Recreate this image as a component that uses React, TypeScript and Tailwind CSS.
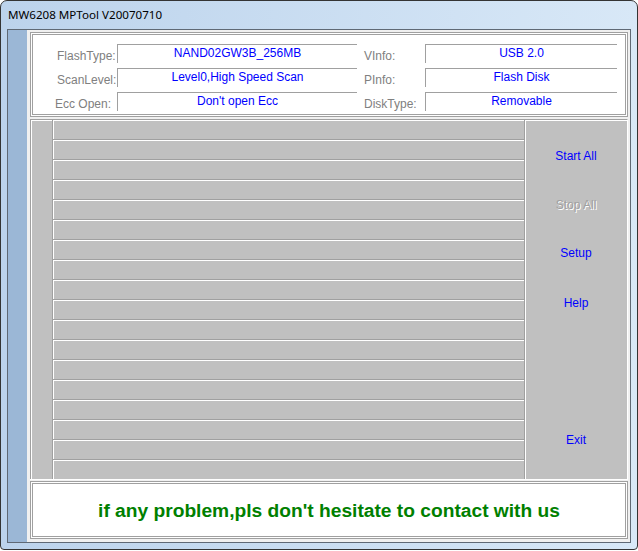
import React from 'react'

const infoRows = [
  { label: 'FlashType:', pad: 'pl-[24px]', value: 'NAND02GW3B_256MB', label2: 'VInfo:', value2: 'USB 2.0' },
  { label: 'ScanLevel:', pad: 'pl-[24px]', value: 'Level0,High Speed Scan', label2: 'PInfo:', value2: 'Flash Disk' },
  { label: 'Ecc Open:', pad: 'pl-[22px]', value: "Don't open Ecc", label2: 'DiskType:', value2: 'Removable' },
]

const cell = 'border-t border-l border-[#a0a0a0] shadow-[inset_1px_1px_0_#fff] bg-[#c0c0c0]'

export default function App() {
  const rows = Array.from({ length: 18 }, (_, i) => i)

  return (
    <div className="w-[638px] h-[551px] bg-white font-['Liberation_Sans',Arial,sans-serif] text-[12px]">
      <div className="w-[638px] h-[550px] border border-[#343434] rounded-t-[7px] rounded-b-[4px] bg-gradient-to-r from-[#bcd3ec] to-[#d8e8f7] flex flex-col overflow-hidden">
        {/* title bar */}
        <div className="h-[28px] shrink-0 pl-[7px] flex items-center text-[11.6px] text-black font-['Noto_Sans',sans-serif]">
          MW6208 MPTool V20070710
        </div>

        {/* client area */}
        <div className="flex-1 mx-[6px] mb-[6px] border border-[#5f6975] flex">
          <div className="w-[20px] bg-[#9bb7d6]" />
          <div className="flex-1 bg-[#f0f0f0] pl-[3px] pr-[2px] pt-[2px]">
            {/* info panel */}
            <div className="h-[85px] border border-[#a0a0a0] p-px bg-white">
              <div className="h-full border border-[#a0a0a0] bg-white pt-[9px] flex flex-col gap-[5px]">
                {infoRows.map((r) => (
                  <div key={r.label} className="flex h-[19px]">
                    <div className={`w-[84px] pt-[5px] leading-[15px] text-[#808080] whitespace-nowrap ${r.pad}`}>{r.label}</div>
                    <div className="w-[240px] border-t border-l border-[#a0a0a0] text-center leading-[16px] text-[#0000ff] whitespace-nowrap">
                      {r.value}
                    </div>
                    <div className="w-[68px] pl-[7px] pt-[5px] leading-[15px] text-[#808080] whitespace-nowrap">{r.label2}</div>
                    <div className="w-[192px] border-t border-l border-[#a0a0a0] text-center leading-[16px] text-[#0000ff] whitespace-nowrap">
                      {r.value2}
                    </div>
                  </div>
                ))}
              </div>
            </div>

            {/* device grid */}
            <div className="mt-[2px] h-[361px] flex border-b border-white">
              <div className={`w-[22px] h-[360px] ${cell}`} />
              <div className="w-[472px] flex flex-col">
                {rows.map((i) => (
                  <div key={i} className={`h-[20px] ${cell}`} />
                ))}
              </div>
              <div className={`w-[104px] h-[360px] border-r border-r-white ${cell} flex flex-col items-center pt-[29px] leading-[15px]`}>
                <button className="text-[#0000ff] leading-[15px]">Start All</button>
                <button className="mt-[34px] text-[#a0a0a0] leading-[15px] [text-shadow:1px_1px_0_#fff]">Stop All</button>
                <button className="mt-[33px] text-[#0000ff] leading-[15px]">Setup</button>
                <button className="mt-[35px] text-[#0000ff] leading-[15px]">Help</button>
                <button className="mt-[122px] text-[#0000ff] leading-[15px]">Exit</button>
              </div>
            </div>

            {/* message panel */}
            <div className="mt-px h-[58px] border border-[#a0a0a0] p-px bg-white">
              <div className="h-full border border-[#a0a0a0] bg-white flex items-center justify-center pt-[2px]">
                <span className="text-[19.2px] font-bold text-[#008000] whitespace-nowrap">
                  if any problem,pls don't hesitate to contact with us
                </span>
              </div>
            </div>
          </div>
        </div>
      </div>
    </div>
  )
}
